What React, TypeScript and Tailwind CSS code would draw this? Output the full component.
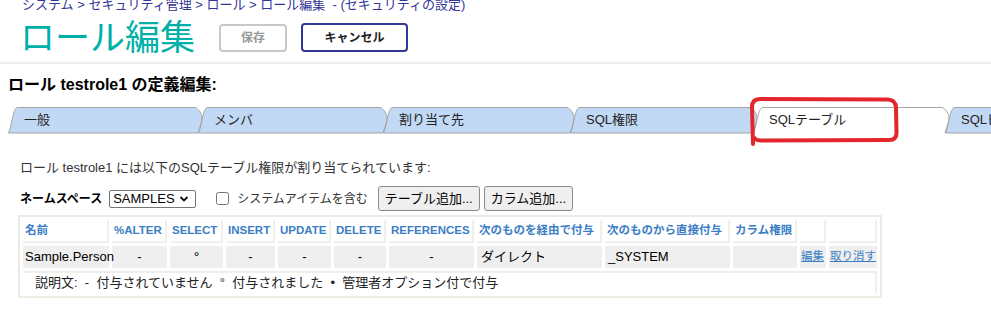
import React from 'react';

const FONT = '"Liberation Sans", "Noto Sans CJK JP", sans-serif';

type Tab = { label: string; width: number; selected?: boolean };

const tabs: Tab[] = [
  { label: '一般', width: 190 },
  { label: 'メンバ', width: 185 },
  { label: '割り当て先', width: 187 },
  { label: 'SQL権限', width: 183 },
  { label: 'SQLテーブル', width: 192, selected: true },
  { label: 'SQLビュー', width: 190 },
];

function TabShape({ w, selected }: { w: number; selected?: boolean }) {
  const edge = `M0.5,26 C3,20 4,12 5,9 C6,5 7,1 9.5,0.5 L${w - 3},0.5 C${w + 1},2 ${w + 4},7 ${w + 4},11 C${w + 4},16 ${w + 1},22 ${w},26`;
  return (
    <svg className="absolute left-0 top-0 overflow-visible" width={w + 6} height={26}>
      <path d={edge + ' Z'} fill={selected ? '#ffffff' : '#c2d9f5'} stroke="none" />
      <path d={selected ? edge : edge + ' Z'} fill="none" stroke="#a3a3a3" strokeWidth={1} />
    </svg>
  );
}

const cols = [
  { label: '名前', w: 'w-[86px]' },
  { label: '%ALTER', w: 'w-[55px]' },
  { label: 'SELECT', w: 'w-[53px]' },
  { label: 'INSERT', w: 'w-[49px]' },
  { label: 'UPDATE', w: 'w-[53px]' },
  { label: 'DELETE', w: 'w-[52px]' },
  { label: 'REFERENCES', w: 'w-[85px]' },
  { label: '次のものを経由で付与', w: 'w-[125px]' },
  { label: '次のものから直接付与', w: 'w-[125px]' },
  { label: 'カラム権限', w: 'w-[64px]' },
  { label: '', w: 'w-[26px]' },
  { label: '', w: 'w-[48px]' },
];

export default function App() {
  return (
    <div className="relative w-[991px] h-[328px] overflow-hidden bg-white text-[#222]" style={{ fontFamily: FONT }}>
      {/* header */}
      <div className="flex flex-col h-[64px] border-b-2 border-[#eeeeee]">
        <div className="-mt-[4px] pl-[22px] text-[13px] leading-[18px] text-[#333695] whitespace-nowrap">
          システム &gt; セキュリティ管理 &gt; ロール &gt; ロール編集&nbsp; - (セキュリティの設定)
        </div>
        <div className="flex items-start pl-[20px]">
          <h1 className="mt-[1px] text-[35px] leading-[46px] font-normal text-[#00b0a8]">ロール編集</h1>
          <button className="ml-[24px] mt-[10px] h-[28px] w-[68px] rounded-[4px] border-2 border-[#c8c8c8] bg-white text-[12px] font-bold text-[#999]">
            保存
          </button>
          <button className="ml-[14px] mt-[9px] h-[29px] w-[107px] rounded-[4px] border-2 border-[#333695] bg-white text-[12px] font-bold text-[#222]">
            キャンセル
          </button>
        </div>
      </div>

      <h2 className="mt-[11px] pl-[8px] text-[16px] leading-[20px] font-bold text-black">ロール testrole1 の定義編集:</h2>

      {/* tabs */}
      <div className="mt-[12px] flex pl-[8px] h-[26px]">
        {tabs.map(t => (
          <div key={t.label} className="relative shrink-0 h-[26px]" style={{ width: t.width }}>
            <TabShape w={t.width} selected={t.selected} />
            <span className="relative block pl-[16px] text-[13px] leading-[26px] text-[#222] whitespace-nowrap">{t.label}</span>
          </div>
        ))}
      </div>

      <p className="mt-[26px] pl-[20px] text-[13px] leading-[18px] text-[#333]">
        ロール testrole1 には以下のSQLテーブル権限が割り当てられています:
      </p>

      {/* namespace row */}
      <div className="mt-[9px] flex items-center pl-[20px] h-[25px] text-[12px]">
        <span className="font-bold text-black">ネームスペース</span>
        <div className="ml-[7px] flex items-center h-[18px] w-[87px] rounded-[2px] border border-[#767676] bg-white pl-[3px] text-[13px] text-black">
          <span className="leading-[16px]">SAMPLES</span>
          <svg className="ml-[4px]" width="10" height="8" viewBox="0 0 10 8">
            <path d="M1.5,2 L5,5.5 L8.5,2" fill="none" stroke="#111" strokeWidth={1.8} />
          </svg>
        </div>
        <input type="checkbox" className="ml-[20px] h-[13px] w-[13px]" />
        <span className="ml-[8px] text-[#333]">システムアイテムを含む</span>
        <button className="ml-[10px] h-[25px] rounded-[3px] border border-[#8a8a8a] bg-[#efefef] px-[6px] text-[13px] text-black">
          テーブル追加...
        </button>
        <button className="ml-[4px] h-[25px] rounded-[3px] border border-[#8a8a8a] bg-[#efefef] px-[6px] text-[13px] text-black">
          カラム追加...
        </button>
      </div>

      {/* table */}
      <div className="ml-[18px] mt-[4px] w-[864px] border-2 border-[#ecebe3]">
        <table className="w-full table-fixed border-separate border-spacing-[3px] text-[12px]">
          <thead>
            <tr className="h-[23px]">
              {cols.map((c, i) => (
                <th
                  key={i}
                  className={`${c.w} border-r-2 border-b-2 border-[#f0f0ea] bg-white px-[2px] text-left text-[11.5px] font-bold text-[#3b7ec4] whitespace-nowrap overflow-hidden`}
                >
                  {c.label}
                </th>
              ))}
            </tr>
          </thead>
          <tbody>
            <tr className="h-[22px] text-[13px] text-black">
              <td className="bg-[#efefef] px-[2px] whitespace-nowrap">Sample.Person</td>
              <td className="bg-[#efefef] text-center">-</td>
              <td className="bg-[#efefef] text-center text-[14px] leading-[14px]">°</td>
              <td className="bg-[#efefef] text-center">-</td>
              <td className="bg-[#efefef] text-center">-</td>
              <td className="bg-[#efefef] text-center">-</td>
              <td className="bg-[#efefef] text-center">-</td>
              <td className="bg-[#efefef] px-[4px]">ダイレクト</td>
              <td className="bg-[#efefef] px-[3px]">_SYSTEM</td>
              <td className="bg-[#efefef]"></td>
              <td className="bg-[#efefef] px-[1px] text-[11.5px] whitespace-nowrap overflow-hidden">
                <a href="#" className="text-[#3b7ec4] underline">編集</a>
              </td>
              <td className="bg-[#efefef] px-[1px] text-[11.5px] whitespace-nowrap overflow-hidden">
                <a href="#" className="text-[#3b7ec4] underline">取り消す</a>
              </td>
            </tr>
            <tr className="h-[22px]">
              <td colSpan={12} className="border-t-2 border-r-2 border-[#f0f0ea] bg-white pl-[12px] text-[13px] text-[#222]">
                説明文:&nbsp; -&nbsp; 付与されていません&nbsp; °&nbsp; 付与されました&nbsp; •&nbsp; 管理者オプション付で付与
              </td>
            </tr>
          </tbody>
        </table>
      </div>

      {/* red hand-drawn annotation */}
      <svg className="absolute left-[746px] top-[94px]" width="156" height="54" viewBox="0 0 156 54">
        <path
          d="M7,50 L6,13 Q6,5 14,5 L142,5.5 Q150,6 150,14 L150.5,39 Q150.5,46 143,46 L15,46.5 Q10,46.5 8.5,44"
          fill="none"
          stroke="#e3262b"
          strokeWidth={4}
          strokeLinecap="round"
          strokeLinejoin="round"
        />
      </svg>
    </div>
  );
}
